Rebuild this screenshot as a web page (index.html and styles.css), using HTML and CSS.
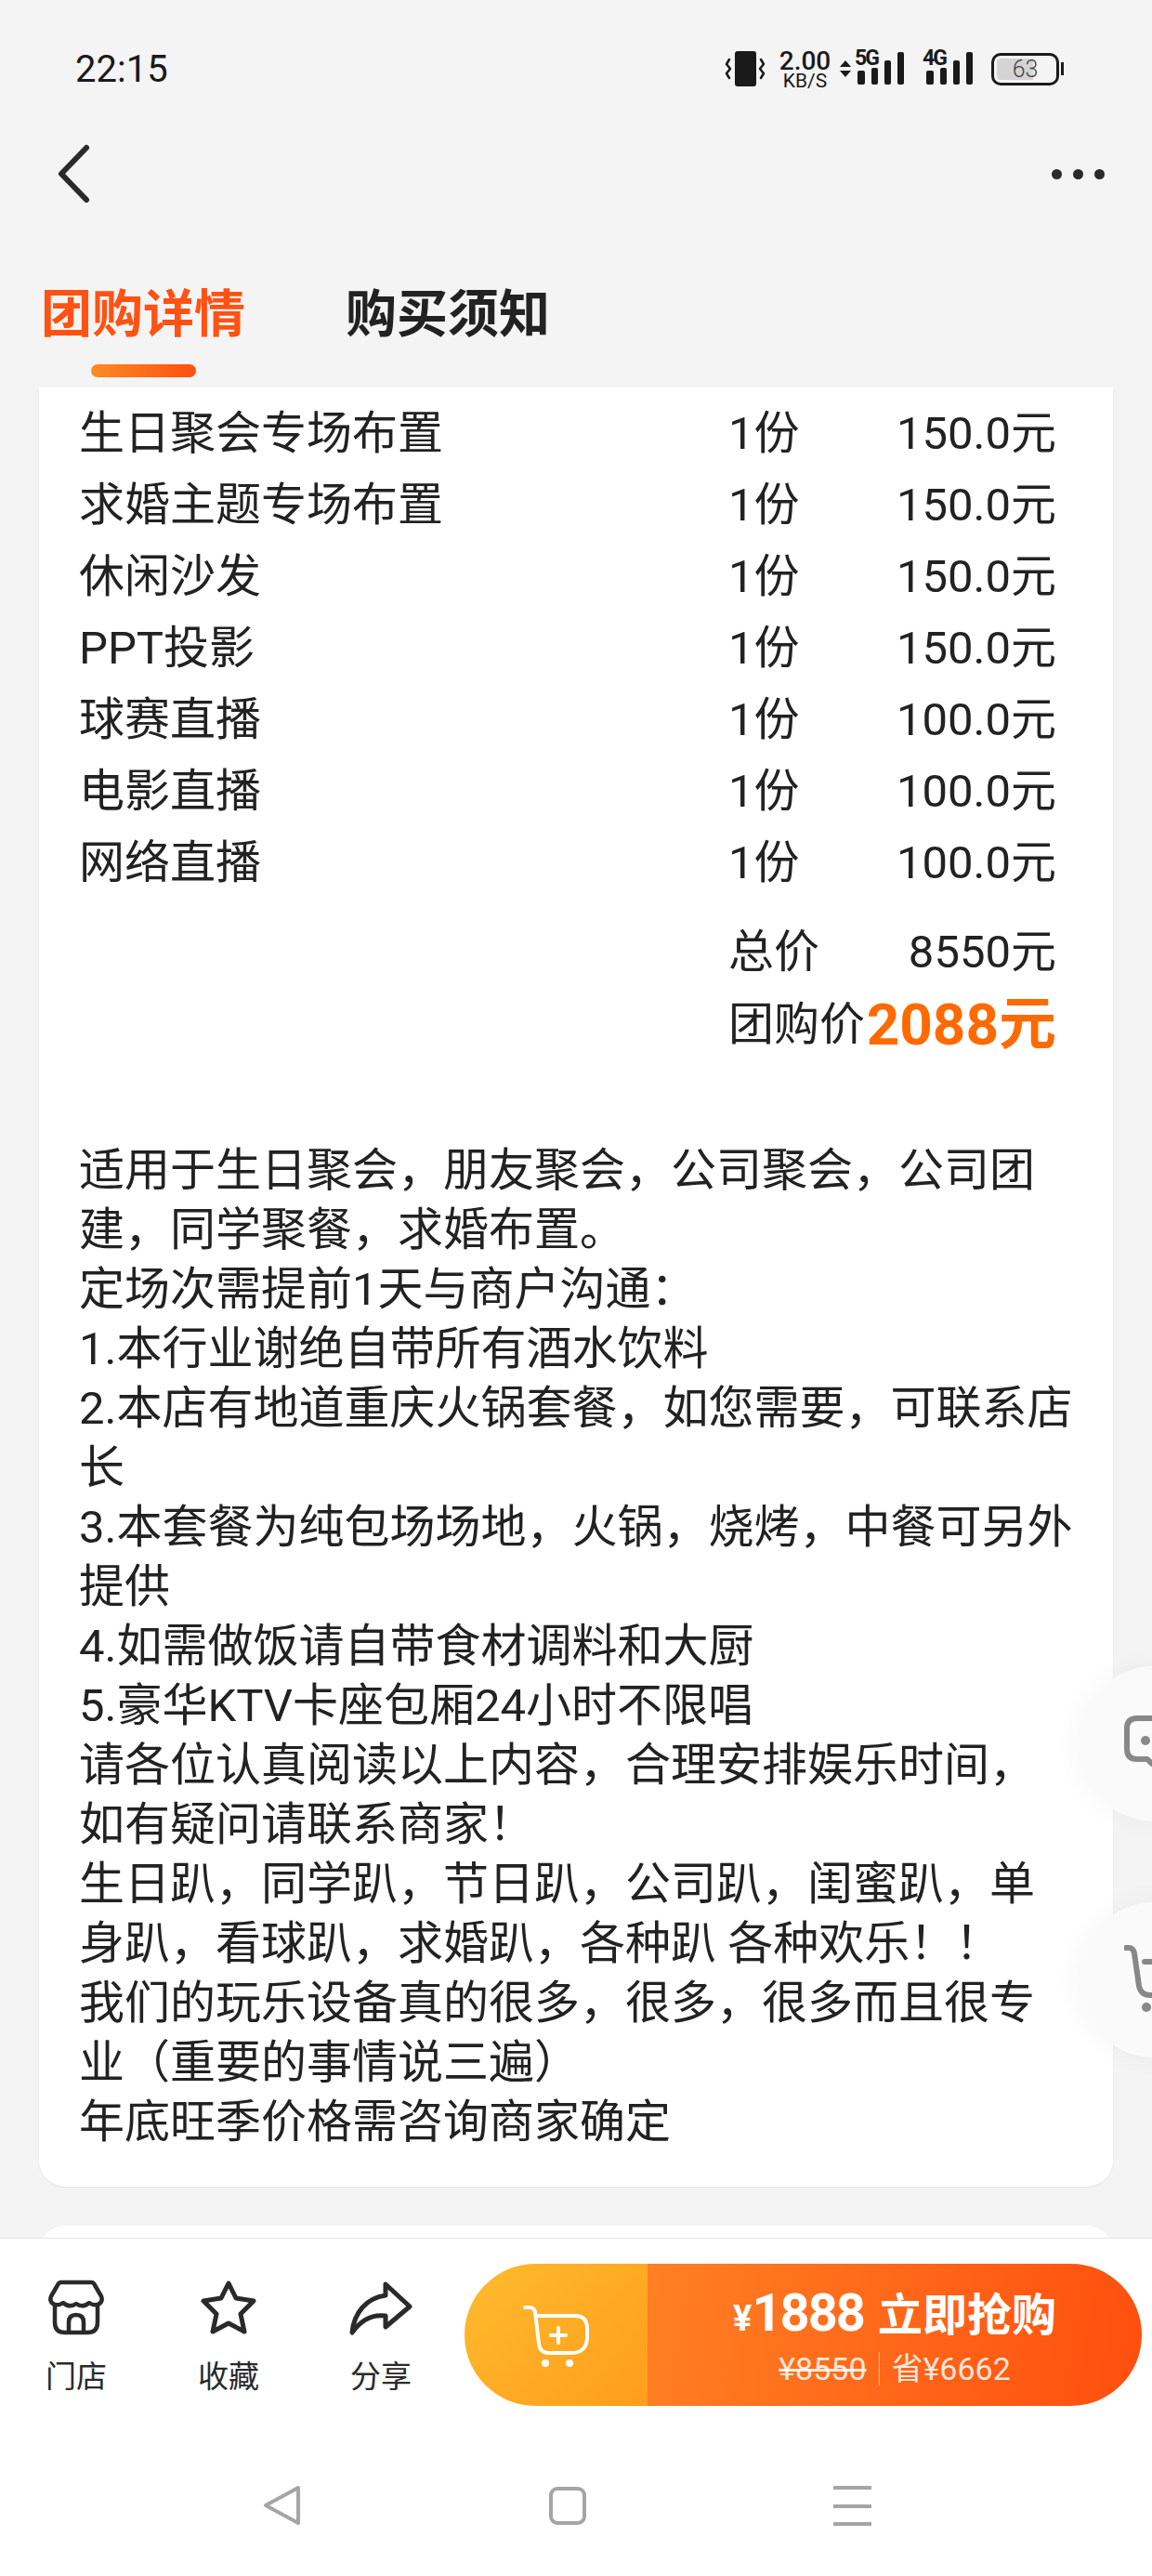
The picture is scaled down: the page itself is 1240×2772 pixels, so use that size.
FILE: index.html
```html
<!DOCTYPE html>
<html lang="zh-CN">
<head>
    <meta charset="UTF-8">
    <meta name="viewport" content="width=device-width, initial-scale=1.0">
    <title>团购详情</title>
    <link rel="stylesheet" href="styles.css">
</head>
<body>
    <div class="page">
        <div class="status">
            <span class="time">22:15</span>
            <div class="status-right">
                <svg class="vibrate" width="44" height="38" viewBox="0 0 44 38">
                    <rect x="11" y="0" width="23" height="38" rx="3" fill="#1a1a1a"/>
                    <path d="M5 9L2 14L6 19L2 24L5 29M39 9L42 14L38 19L42 24L39 29" fill="none" stroke="#1a1a1a" stroke-width="2.5" stroke-linecap="round" stroke-linejoin="round"/>
                </svg>
                <div class="speed"><span class="speed-num">2.00</span><span class="speed-unit">KB/S</span></div>
                <svg class="arrows" width="12" height="18" viewBox="0 0 12 18">
                    <path d="M6 0L12 7H0ZM6 18L0 11H12Z" fill="#1a1a1a"/>
                </svg>
                <div class="signal">
                    <span class="signal-label">5G</span>
                    <svg width="50" height="36" viewBox="0 0 50 36">
                        <rect x="0" y="20" width="8" height="15" rx="2" fill="#1a1a1a"/>
                        <rect x="15" y="17" width="7" height="18" rx="2" fill="#1a1a1a"/>
                        <rect x="29" y="9" width="7" height="26" rx="2" fill="#1a1a1a"/>
                        <rect x="43" y="0" width="7" height="35" rx="2" fill="#1a1a1a"/>
                    </svg>
                </div>
                <div class="signal signal-second">
                    <span class="signal-label">4G</span>
                    <svg width="50" height="36" viewBox="0 0 50 36">
                        <rect x="0" y="20" width="8" height="15" rx="2" fill="#1a1a1a"/>
                        <rect x="15" y="17" width="7" height="18" rx="2" fill="#1a1a1a"/>
                        <rect x="29" y="9" width="7" height="26" rx="2" fill="#1a1a1a"/>
                        <rect x="43" y="0" width="7" height="35" rx="2" fill="#1a1a1a"/>
                    </svg>
                </div>
                <div class="battery"><span class="battery-num">63</span></div>
                <span class="battery-nib"></span>
            </div>
        </div>

        <div class="nav">
            <svg width="38" height="66" viewBox="0 0 38 66">
                <path d="M33 5L6 33L33 61" fill="none" stroke="#2a2a2a" stroke-width="6" stroke-linecap="round" stroke-linejoin="round"/>
            </svg>
            <div class="dots"><span></span><span></span><span></span></div>
        </div>

        <div class="tabs">
            <div class="tab tab-active">团购详情<span class="tab-line"></span></div>
            <div class="tab">购买须知</div>
        </div>

        <div class="main">
            <div class="card">
                <div class="row"><span>生日聚会专场布置</span><span>1份</span><span class="price">150.0元</span></div>
                <div class="row"><span>求婚主题专场布置</span><span>1份</span><span class="price">150.0元</span></div>
                <div class="row"><span>休闲沙发</span><span>1份</span><span class="price">150.0元</span></div>
                <div class="row"><span>PPT投影</span><span>1份</span><span class="price">150.0元</span></div>
                <div class="row"><span>球赛直播</span><span>1份</span><span class="price">100.0元</span></div>
                <div class="row"><span>电影直播</span><span>1份</span><span class="price">100.0元</span></div>
                <div class="row"><span>网络直播</span><span>1份</span><span class="price">100.0元</span></div>
                <div class="row row-total"><span></span><span>总价</span><span class="price">8550元</span></div>
                <div class="row row-group"><span></span><span>团购价</span><span class="price price-group">2088元</span></div>

                <div class="desc">
                    <p>适用于生日聚会，朋友聚会，公司聚会，公司团建，同学聚餐，求婚布置。</p>
                    <p>定场次需提前1天与商户沟通：</p>
                    <p>1.本行业谢绝自带所有酒水饮料</p>
                    <p>2.本店有地道重庆火锅套餐，如您需要，可联系店长</p>
                    <p>3.本套餐为纯包场场地，火锅，烧烤，中餐可另外提供</p>
                    <p>4.如需做饭请自带食材调料和大厨</p>
                    <p>5.豪华KTV卡座包厢24小时不限唱</p>
                    <p>请各位认真阅读以上内容，合理安排娱乐时间，如有疑问请联系商家！</p>
                    <p>生日趴，同学趴，节日趴，公司趴，闺蜜趴，单身趴，看球趴，求婚趴，各种趴 各种欢乐！！</p>
                    <p>我们的玩乐设备真的很多，很多，很多而且很专业（重要的事情说三遍）</p>
                    <p>年底旺季价格需咨询商家确定</p>
                </div>
            </div>
            <div class="card card-next"></div>

            <div class="float float-chat">
                <svg width="30" height="62" viewBox="0 0 30 62">
                    <path d="M14 3H30M14 3Q3 3 3 14V36Q3 47 14 47H25L30 52" fill="none" stroke="#888" stroke-width="6" stroke-linecap="round" stroke-linejoin="round"/>
                    <circle cx="23" cy="27" r="5" fill="#888"/>
                </svg>
            </div>
            <div class="float float-cart">
                <svg width="30" height="76" viewBox="0 0 30 76">
                    <path d="M2 3H5Q10 3 11 9L16 44Q18 54 28 54H30M22 18H30" fill="none" stroke="#888" stroke-width="6" stroke-linecap="round" stroke-linejoin="round"/>
                    <circle cx="24" cy="67" r="5" fill="#888"/>
                </svg>
            </div>
        </div>

        <div class="bar">
            <div class="bar-top">
                <div class="bar-items">
                    <div class="bar-item">
                        <svg width="60" height="60" viewBox="0 0 60 60">
                            <path d="M14 3H46Q49 3 50 6L57 18Q59 23 55 26Q50 29 44 25Q37 31 30 26Q23 31 16 25Q10 29 5 26Q1 23 3 18L10 6Q11 3 14 3Z" fill="none" stroke="#2a2a2a" stroke-width="4.5" stroke-linejoin="round"/>
                            <path d="M7 27V46Q7 57 18 57H42Q53 57 53 46V27M22 57V46Q22 38 30 38Q38 38 38 46V57" fill="none" stroke="#2a2a2a" stroke-width="4.5" stroke-linejoin="round"/>
                        </svg>
                        <span>门店</span>
                    </div>
                    <div class="bar-item">
                        <svg width="62" height="60" viewBox="0 0 62 60">
                            <path d="M31 4L39 20L58 23L44 37L48 56L31 47L14 56L18 37L4 23L23 20Z" fill="none" stroke="#2a2a2a" stroke-width="5" stroke-linejoin="round"/>
                        </svg>
                        <span>收藏</span>
                    </div>
                    <div class="bar-item">
                        <svg width="68" height="60" viewBox="0 0 68 60">
                            <path d="M39 5L65 29L39 51V39C24 37 13 43 3 57C5 36 18 20 39 17Z" fill="none" stroke="#2a2a2a" stroke-width="5" stroke-linejoin="round"/>
                        </svg>
                        <span>分享</span>
                    </div>
                </div>
                <div class="buy">
                    <div class="buy-cart">
                        <svg width="72" height="70" viewBox="0 0 72 70">
                            <path d="M2 3H7Q12 3 13 8L17 42Q18 52 28 52H52Q68 52 69 36V26Q69 12 56 12H14" fill="none" stroke="#fff" stroke-width="4" stroke-linecap="round" stroke-linejoin="round"/>
                            <path d="M38 25V41M30 33H46" fill="none" stroke="#fff" stroke-width="4" stroke-linecap="round"/>
                            <circle cx="24" cy="63" r="4" fill="#fff"/>
                            <circle cx="50" cy="63" r="4" fill="#fff"/>
                        </svg>
                    </div>
                    <div class="buy-now">
                        <div class="buy-title"><span class="buy-yen">¥</span><span class="buy-num">1888</span><span class="buy-word">立即抢购</span></div>
                        <div class="buy-sub"><s>¥8550</s><span class="buy-sep"></span>省¥6662</div>
                    </div>
                </div>
            </div>
            <div class="sysnav">
                <svg width="44" height="44" viewBox="0 0 44 44">
                    <path d="M39 3V41L4 22Z" fill="none" stroke="#a5a5a5" stroke-width="4" stroke-linejoin="round"/>
                </svg>
                <svg width="44" height="44" viewBox="0 0 44 44">
                    <rect x="4" y="4" width="36" height="37" rx="7" fill="none" stroke="#a5a5a5" stroke-width="4"/>
                </svg>
                <svg width="44" height="44" viewBox="0 0 44 44">
                    <path d="M2 3H43M2 23H43M2 42H43" fill="none" stroke="#a5a5a5" stroke-width="4"/>
                </svg>
            </div>
        </div>
    </div>
</body>
</html>
```

FILE: styles.css
```css
* {
    box-sizing: border-box;
}

html, body {
    margin: 0;
    padding: 0;
}

body {
    font-family: Roboto, "Noto Sans CJK SC", sans-serif;
    color: #222;
    background-color: #f4f4f4;
}

.page {
    position: relative;
    width: 1240px;
    height: 2772px;
    display: flex;
    flex-direction: column;
    overflow: hidden;
}

/* status bar */
.status {
    height: 148px;
    flex: none;
    display: flex;
    align-items: center;
    justify-content: space-between;
    padding: 0 95px 0 81px;
}

.time {
    font-size: 40px;
    color: #1a1a1a;
}

.status-right {
    display: flex;
    align-items: center;
}

.speed {
    display: flex;
    flex-direction: column;
    align-items: center;
    width: 57px;
    margin-left: 14px;
    color: #1a1a1a;
}

.speed-num {
    font-size: 28px;
    line-height: 25px;
    font-weight: 500;
}

.speed-unit {
    font-size: 21px;
    line-height: 18px;
}

.arrows {
    margin: 0 7px 0 9px;
}

.signal {
    position: relative;
    width: 50px;
    height: 36px;
}

.signal svg {
    display: block;
}

.signal-second {
    margin-left: 24px;
}

.signal-label {
    position: absolute;
    left: -3px;
    top: -3px;
    font-size: 23px;
    line-height: 20px;
    font-weight: 700;
    letter-spacing: -2px;
    color: #1a1a1a;
}

.signal-second .signal-label {
    left: -4px;
}

.battery {
    width: 73px;
    height: 35px;
    margin-left: 20px;
    border: 3px solid #1a1a1a;
    border-radius: 10px;
    background: linear-gradient(90deg, #d4d4d4 63%, transparent 63%);
    background-clip: content-box;
    padding: 3px;
    display: flex;
    align-items: center;
    justify-content: center;
}

.battery-num {
    font-size: 25px;
    font-weight: 300;
    color: #444;
}

.battery-nib {
    width: 3px;
    height: 14px;
    margin-left: 2px;
    background-color: #1a1a1a;
}

/* nav */
.nav {
    height: 78px;
    flex: none;
    display: flex;
    align-items: center;
    justify-content: space-between;
    padding: 0 51px 0 60px;
}

.dots {
    display: flex;
    gap: 12px;
}

.dots span {
    width: 11px;
    height: 11px;
    border-radius: 50%;
    background-color: #2a2a2a;
}

/* tabs */
.tabs {
    height: 191px;
    flex: none;
    display: flex;
    gap: 108px;
    padding: 82px 0 0 44px;
}

.tab {
    display: flex;
    flex-direction: column;
    align-items: center;
    font-size: 55px;
    line-height: 60px;
    font-weight: 700;
    color: #222;
}

.tab-active {
    color: #ff5214;
}

.tab-line {
    width: 113px;
    height: 14px;
    margin-top: 24px;
    border-radius: 7px;
    background: linear-gradient(90deg, #ff8a24, #ff4f10);
}

/* content */
.main {
    position: relative;
    flex: 1;
    min-height: 0;
    padding: 0 42px;
    overflow: hidden;
}

.card {
    background-color: #fff;
    border-radius: 0 0 28px 28px;
    box-shadow: 0 1px 2px rgba(0, 0, 0, 0.08);
    padding: 6px 44px 37px 43px;
    font-size: 49px;
}

.card-next {
    height: 40px;
    margin-top: 42px;
    padding: 0;
    border-radius: 28px 28px 0 0;
}

.row {
    display: grid;
    grid-template-columns: 699px 1fr auto;
    align-items: center;
    width: 1052px;
    height: 77px;
}

.price {
    text-align: right;
}

.row-total {
    margin-top: 19px;
}

.row-group {
    height: 75px;
    margin-top: -6px;
}

.price-group {
    font-size: 62px;
    font-weight: 700;
    color: #ff6a00;
    white-space: nowrap;
}

.desc {
    width: 1072px;
    margin-top: 101px;
    line-height: 64px;
}

.desc p {
    margin: 0;
}

.float {
    position: absolute;
    left: 1160px;
    width: 167px;
    height: 167px;
    border-radius: 50%;
    background-color: #fafafa;
    box-shadow: 0 0 30px rgba(0, 0, 0, 0.04);
    display: flex;
    align-items: center;
    padding-left: 50px;
}

.float-chat {
    top: 1376px;
}

.float-cart {
    top: 1630px;
}

/* bottom bar */
.bar {
    height: 364px;
    flex: none;
    background-color: #fff;
    border-top: 1px solid #e4e4e4;
}

.bar-top {
    display: flex;
    height: 183px;
    padding-top: 27px;
}

.bar-items {
    display: flex;
    width: 500px;
    padding-top: 17px;
}

.bar-item {
    width: 164px;
    display: flex;
    flex-direction: column;
    align-items: center;
    font-size: 33px;
    line-height: 44px;
    color: #2a2a2a;
}

.bar-item svg {
    display: block;
    margin-bottom: 23px;
}

.buy {
    display: flex;
    width: 729px;
    height: 153px;
    color: #fff;
}

.buy-cart {
    width: 197px;
    padding: 44px 0 0 63px;
    border-radius: 77px 0 0 77px;
    background: linear-gradient(135deg, #ffbb2e, #ff9d1c);
}

.buy-cart svg {
    display: block;
}

.buy-now {
    flex: 1;
    display: flex;
    flex-direction: column;
    align-items: center;
    padding-top: 20px;
    border-radius: 0 77px 77px 0;
    background: linear-gradient(100deg, #ff8024, #ff4e0e);
}

.buy-title {
    display: flex;
    align-items: baseline;
    font-size: 48px;
    line-height: 66px;
    font-weight: 700;
    white-space: nowrap;
}

.buy-yen {
    font-size: 38px;
}

.buy-num {
    font-size: 56px;
    letter-spacing: -2px;
}

.buy-word {
    margin-left: 15px;
}

.buy-sub {
    display: flex;
    align-items: center;
    font-size: 34px;
    line-height: 42px;
    color: rgba(255, 255, 255, 0.85);
}

.buy-sep {
    width: 1px;
    height: 36px;
    margin: 0 13px;
    background-color: rgba(255, 255, 255, 0.6);
}

.sysnav {
    height: 180px;
    display: flex;
    justify-content: space-between;
    padding: 82px 301px 0 282px;
}
```
